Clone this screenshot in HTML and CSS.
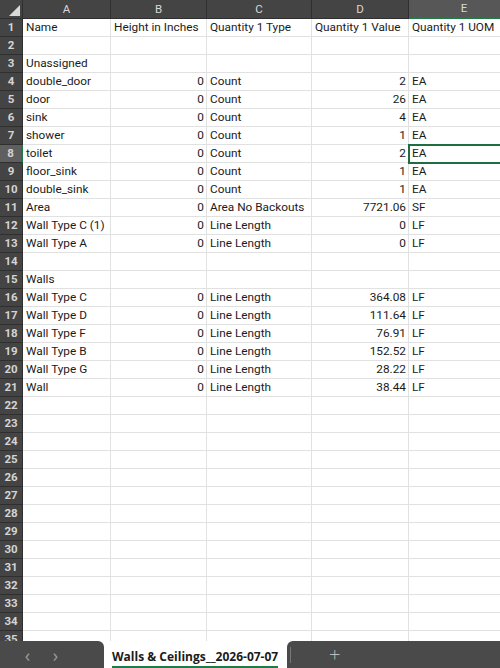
FILE: index.html
```html
<!DOCTYPE html>
<html lang="en">

<head>
    <meta charset="UTF-8" />
    <meta name="viewport" content="width=device-width, initial-scale=1" />
    <title>Walls &amp; Ceilings</title>
    <link rel="stylesheet" href="styles.css">
</head>

<body>
    <!-- Sheet Grid -->
    <main class="sheet">
        <table class="grid">
            <colgroup>
                <col class="col-head">
                <col class="col-a">
                <col class="col-b">
                <col class="col-c">
                <col class="col-d">
                <col class="col-e">
            </colgroup>
            <thead>
                <tr>
                    <th class="corner"><span class="corner-tri"></span></th>
                    <th>A</th>
                    <th>B</th>
                    <th>C</th>
                    <th>D</th>
                    <th class="sel-col">E</th>
                </tr>
            </thead>
            <tbody>
                <tr><th>1</th><td>Name</td><td>Height in Inches</td><td>Quantity 1 Type</td><td>Quantity 1 Value</td><td>Quantity 1 UOM</td></tr>
                <tr><th>2</th><td></td><td></td><td></td><td></td><td></td></tr>
                <tr><th>3</th><td>Unassigned</td><td></td><td></td><td></td><td></td></tr>
                <tr><th>4</th><td>double_door</td><td class="num">0</td><td>Count</td><td class="num">2</td><td>EA</td></tr>
                <tr><th>5</th><td>door</td><td class="num">0</td><td>Count</td><td class="num">26</td><td>EA</td></tr>
                <tr><th>6</th><td>sink</td><td class="num">0</td><td>Count</td><td class="num">4</td><td>EA</td></tr>
                <tr><th>7</th><td>shower</td><td class="num">0</td><td>Count</td><td class="num">1</td><td>EA</td></tr>
                <tr><th class="sel-row">8</th><td>toilet</td><td class="num">0</td><td>Count</td><td class="num">2</td><td class="active">EA</td></tr>
                <tr><th>9</th><td>floor_sink</td><td class="num">0</td><td>Count</td><td class="num">1</td><td>EA</td></tr>
                <tr><th>10</th><td>double_sink</td><td class="num">0</td><td>Count</td><td class="num">1</td><td>EA</td></tr>
                <tr><th>11</th><td>Area</td><td class="num">0</td><td>Area No Backouts</td><td class="num">7721.06</td><td>SF</td></tr>
                <tr><th>12</th><td>Wall Type C (1)</td><td class="num">0</td><td>Line Length</td><td class="num">0</td><td>LF</td></tr>
                <tr><th>13</th><td>Wall Type A</td><td class="num">0</td><td>Line Length</td><td class="num">0</td><td>LF</td></tr>
                <tr><th>14</th><td></td><td></td><td></td><td></td><td></td></tr>
                <tr><th>15</th><td>Walls</td><td></td><td></td><td></td><td></td></tr>
                <tr><th>16</th><td>Wall Type C</td><td class="num">0</td><td>Line Length</td><td class="num">364.08</td><td>LF</td></tr>
                <tr><th>17</th><td>Wall Type D</td><td class="num">0</td><td>Line Length</td><td class="num">111.64</td><td>LF</td></tr>
                <tr><th>18</th><td>Wall Type F</td><td class="num">0</td><td>Line Length</td><td class="num">76.91</td><td>LF</td></tr>
                <tr><th>19</th><td>Wall Type B</td><td class="num">0</td><td>Line Length</td><td class="num">152.52</td><td>LF</td></tr>
                <tr><th>20</th><td>Wall Type G</td><td class="num">0</td><td>Line Length</td><td class="num">28.22</td><td>LF</td></tr>
                <tr><th>21</th><td>Wall</td><td class="num">0</td><td>Line Length</td><td class="num">38.44</td><td>LF</td></tr>
                <tr><th>22</th><td></td><td></td><td></td><td></td><td></td></tr>
                <tr><th>23</th><td></td><td></td><td></td><td></td><td></td></tr>
                <tr><th>24</th><td></td><td></td><td></td><td></td><td></td></tr>
                <tr><th>25</th><td></td><td></td><td></td><td></td><td></td></tr>
                <tr><th>26</th><td></td><td></td><td></td><td></td><td></td></tr>
                <tr><th>27</th><td></td><td></td><td></td><td></td><td></td></tr>
                <tr><th>28</th><td></td><td></td><td></td><td></td><td></td></tr>
                <tr><th>29</th><td></td><td></td><td></td><td></td><td></td></tr>
                <tr><th>30</th><td></td><td></td><td></td><td></td><td></td></tr>
                <tr><th>31</th><td></td><td></td><td></td><td></td><td></td></tr>
                <tr><th>32</th><td></td><td></td><td></td><td></td><td></td></tr>
                <tr><th>33</th><td></td><td></td><td></td><td></td><td></td></tr>
                <tr><th>34</th><td></td><td></td><td></td><td></td><td></td></tr>
                <tr><th>35</th><td></td><td></td><td></td><td></td><td></td></tr>
            </tbody>
        </table>
    </main>

    <!-- Sheet Tabs -->
    <footer class="tabs">
        <div class="tabs-nav">
            <span class="nav-btn">&#x2039;</span>
            <span class="nav-btn">&#x203A;</span>
        </div>
        <div class="tab-active"><span>Walls &amp; Ceilings__2026-07-07</span></div>
        <div class="tabs-rest">
            <span class="tab-sep"></span>
            <span class="add-btn">+</span>
        </div>
    </footer>
</body>

</html>
```

FILE: styles.css
```css
/* Reset & Global Styles */
* {
    margin: 0;
    padding: 0;
    box-sizing: border-box;
}

body {
    width: 500px;
    height: 668px;
    display: flex;
    flex-direction: column;
    overflow: hidden;
    background: #fff;
    font-family: Roboto, 'Liberation Sans', sans-serif;
    color: #1b1b1b;
}

/* Grid */
.sheet {
    flex: 1;
    overflow: hidden;
}

.grid {
    border-collapse: separate;
    border-spacing: 0;
    table-layout: fixed;
    width: 520px;
    font-size: 11.8px;
}

.col-head { width: 23px; }
.col-a { width: 88px; }
.col-b { width: 96px; }
.col-c { width: 105px; }
.col-d { width: 97px; }
.col-e { width: 111px; }

.grid td {
    height: 18px;
    line-height: 17px;
    padding: 0 2px 0 3px;
    border-right: 1px solid #e1e1e1;
    border-bottom: 1px solid #e1e1e1;
    white-space: nowrap;
    overflow: hidden;
    vertical-align: bottom;
}

.grid td.num {
    text-align: right;
}

.grid td.active {
    outline: 2px solid #1e6e42;
    outline-offset: -1px;
}

/* Headers */
.grid th {
    background: #444;
    color: #e6e6e6;
    font-weight: normal;
    font-size: 11.5px;
    border-right: 1px solid #2f2f2f;
    border-bottom: 1px solid #2f2f2f;
    height: 18px;
    line-height: 17px;
}

.grid thead th {
    height: 18px;
    color: #d8d8d8;
}

.grid tbody th {
    font-weight: bold;
    color: #d4d4d4;
    font-size: 11.5px;
}

.grid th.sel-col {
    background: #575757;
    border-bottom: 2px solid #1e7b45;
}

.grid th.sel-row {
    background: #5f5f5f;
    border-right: 2px solid #1e7b45;
}

.corner {
    position: relative;
}

.corner-tri {
    position: absolute;
    right: 2px;
    bottom: 2px;
    width: 0;
    height: 0;
    border-left: 11px solid transparent;
    border-bottom: 11px solid #d9d9d9;
}

/* Sheet Tabs */
.tabs {
    height: 27px;
    display: flex;
    background: #fff;
    font-family: 'Open Sans', Roboto, sans-serif;
}

.tabs-nav {
    width: 104px;
    background: #4a4a4a;
    border-top-right-radius: 6px;
    display: flex;
    align-items: center;
    gap: 17px;
    padding-left: 22px;
}

.nav-btn {
    color: #9a9a9a;
    font-size: 18px;
    line-height: 20px;
    width: 11px;
    text-align: center;
}

.tab-active {
    width: 183px;
    background: #fff;
    padding: 3px 0 0 8px;
}

.tab-active span {
    display: inline-block;
    font-size: 12px;
    font-weight: bold;
    color: #1b1b1b;
    line-height: 18px;
    border-bottom: 2px solid #1e7b45;
}

.tabs-rest {
    flex: 1;
    background: #4a4a4a;
    border-top-left-radius: 6px;
    display: flex;
    align-items: center;
}

.tab-sep {
    width: 1px;
    height: 16px;
    background: #777;
    margin-left: 3px;
}

.add-btn {
    color: #bdbdbd;
    font-size: 20px;
    line-height: 20px;
    margin-left: 38px;
    font-weight: 300;
}
```
